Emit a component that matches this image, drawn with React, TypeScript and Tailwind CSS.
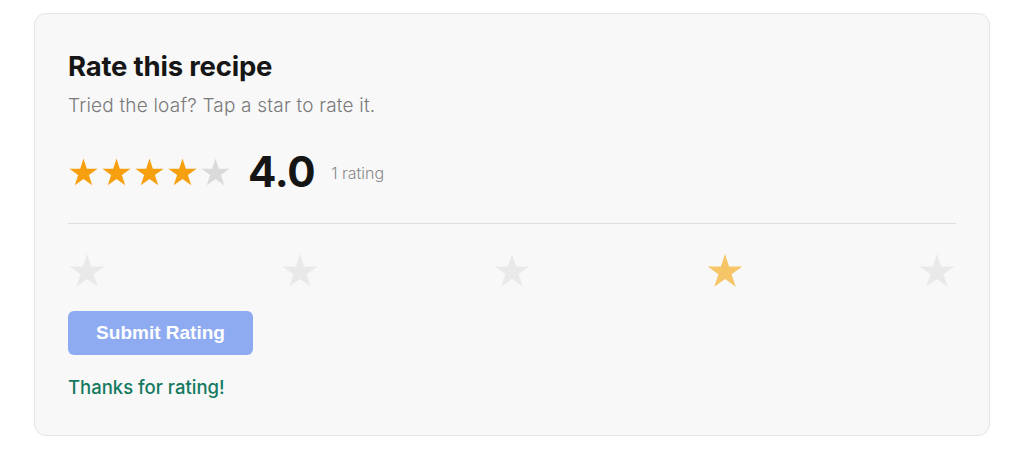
import { useState } from "react";

const STAR_POINTS =
  "12,1 14.58,8.95 22.94,8.95 16.18,13.86 18.76,21.8 12,16.89 5.24,21.8 7.82,13.86 1.06,8.95 9.42,8.95";

function Star({ className }: { className: string }) {
  return (
    <svg viewBox="0 0 24 23" className={className} aria-hidden="true">
      <polygon points={STAR_POINTS} fill="currentColor" />
    </svg>
  );
}

export default function App() {
  const [picked, setPicked] = useState(4);
  const average = 4;

  return (
    <div className="min-h-screen bg-white px-[34px] pt-[13px] font-['Inter',sans-serif]">
      <div className="rounded-xl border border-[#e4e4e6] bg-[#f8f8f9] px-[33px] pb-[36px] pt-[34px]">
        {/* Header */}
        <h2 className="text-[27.5px] font-bold leading-[36px] tracking-[-0.2px] text-[#161616]">
          Rate this recipe
        </h2>
        <p className="mt-[9px] text-[19px] font-light leading-[26px] tracking-[0.2px] text-[#7a7a7a]">
          Tried the loaf? Tap a star to rate it.
        </p>

        {/* Summary */}
        <div className="mt-[32px] flex items-center">
          <div className="flex gap-[2px]">
            {[1, 2, 3, 4, 5].map((n) => (
              <Star
                key={n}
                className={`h-[30px] w-[31px] ${n <= average ? "text-[#f7a00f]" : "text-[#dadada]"}`}
              />
            ))}
          </div>
          <span className="ml-[17px] text-[42px] font-bold leading-none tracking-[-0.3px] text-[#151515]">
            4.0
          </span>
          <span className="ml-[16px] mt-[2px] text-[16px] font-light text-[#8a8a8a]">1 rating</span>
        </div>

        <div className="mt-[30px] h-px bg-[#dedede]" />

        {/* Picker */}
        <div className="mt-[28px] flex justify-between">
          {[1, 2, 3, 4, 5].map((n) => (
            <button key={n} onClick={() => setPicked(n)} className="cursor-pointer">
              <Star
                className={`h-[37px] w-[38px] ${n === picked ? "text-[#f6c567]" : "text-[#e9e9ea]"}`}
              />
            </button>
          ))}
        </div>

        <button className="mt-[22px] h-[44px] w-[185px] rounded-md bg-[#8eabf2] font-['Liberation_Sans',Arial,sans-serif] text-[19px] font-bold text-white">
          Submit Rating
        </button>

        <p className="mt-[20px] text-[18.5px] font-medium leading-[24px] text-[#147a5f]">
          Thanks for rating!
        </p>
      </div>
    </div>
  );
}
